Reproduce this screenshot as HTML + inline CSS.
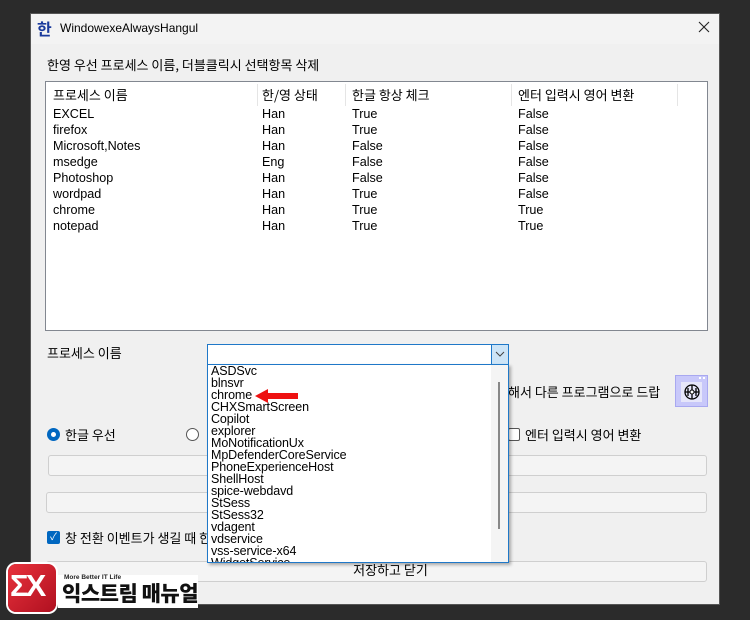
<!DOCTYPE html>
<html><head><meta charset="utf-8"><style>
*{margin:0;padding:0;box-sizing:border-box}
body{width:750px;height:620px;background:#2b2b2b;position:relative;overflow:hidden;font-family:"Liberation Sans","Noto Sans CJK KR",sans-serif;font-size:12px;color:#000}
.a{position:absolute;white-space:nowrap}
#win{position:absolute;left:30px;top:13px;width:690px;height:592px;background:#f0f0f0;border:1px solid #555}
#tb{position:absolute;left:0;top:0;width:100%;height:30px;background:#f3f3f3}
.k{font-family:"Noto Sans CJK KR",sans-serif;font-size:13px;line-height:15px}
#list{position:absolute;left:45px;top:81px;width:663px;height:250px;background:#fff;border:1px solid #828790}
.sep{position:absolute;top:2px;width:1px;height:22px;background:#e5e5e5}
.inp{position:absolute;height:21px;background:#f4f4f4;border:1px solid #cfcfcf;border-radius:3px}
#dd{position:absolute;left:207px;top:364px;width:302px;height:199px;background:#fff;border:1px solid #1f78c8;box-shadow:2px 2px 3px rgba(0,0,0,.3);overflow:hidden}
#dd div{height:12px;line-height:12px;font-size:12.5px;padding-left:3px;letter-spacing:-0.1px}
.col{line-height:16px;font-size:12.6px}
</style></head><body>
<div id="win">
 <div id="tb"></div>
</div>
<div class="a" style="left:37px;top:16px;font-family:'Noto Sans CJK KR',sans-serif;font-size:16px;font-weight:bold;color:#1a3a9c">한</div>
<div class="a" style="left:60px;top:21px;font-size:12px">WindowexeAlwaysHangul</div>
<svg class="a" style="left:698px;top:21px" width="12" height="12"><path d="M1 1L11 11M11 1L1 11" stroke="#222" stroke-width="1.1"/></svg>
<div class="a k" style="left:47px;top:57px">한영 우선 프로세스 이름, 더블클릭시 선택항목 삭제</div>
<div id="list">
 <div class="a k" style="left:7px;top:5px">프로세스 이름</div>
 <div class="a k" style="left:216px;top:5px">한/영 상태</div>
 <div class="a k" style="left:306px;top:5px">한글 항상 체크</div>
 <div class="a k" style="left:472px;top:5px">엔터 입력시 영어 변환</div>
 <div class="sep" style="left:211px"></div><div class="sep" style="left:299px"></div><div class="sep" style="left:465px"></div><div class="sep" style="left:631px"></div>
</div>
<div class="a col" style="left:53px;top:106px">EXCEL<br>firefox<br>Microsoft,Notes<br>msedge<br>Photoshop<br>wordpad<br>chrome<br>notepad</div>
<div class="a col" style="left:262px;top:106px">Han<br>Han<br>Han<br>Eng<br>Han<br>Han<br>Han<br>Han</div>
<div class="a col" style="left:352px;top:106px">True<br>True<br>False<br>False<br>False<br>True<br>True<br>True</div>
<div class="a col" style="left:518px;top:106px">False<br>False<br>False<br>False<br>False<br>False<br>True<br>True</div>

<div class="a k" style="left:47px;top:345px">프로세스 이름</div>
<div class="a" style="left:207px;top:344px;width:302px;height:21px;background:#fff;border:1px solid #1f78c8"></div>
<div class="a" style="left:491px;top:345px;width:17px;height:19px;background:#cce4f7;border-left:1px solid #1f78c8"></div>
<svg class="a" style="left:495px;top:351px" width="10" height="6"><path d="M1 1L5 5L9 1" stroke="#444" fill="none"/></svg>

<div class="a k" style="left:508px;top:384px">해서 다른 프로그램으로 드랍</div>
<div class="a" style="left:675px;top:375px;width:33px;height:32px;background:#c8c8fa;border:1px solid #a8a8f0">
 <div class="a" style="left:5px;top:6px;width:21px;height:20px;background:#e6e6fa"></div>
 <div class="a" style="left:23px;top:1px;width:2px;height:2px;background:#fff"></div><div class="a" style="left:27px;top:1px;width:2px;height:2px;background:#fff"></div>
 <svg class="a" style="left:6px;top:7px" width="20" height="18" viewBox="0 0 20 18"><circle cx="10" cy="9" r="7" fill="none" stroke="#000" stroke-width="1.3"/><path d="M3 9H17M10 2V16M6 5V13M14 5V13" stroke="#000" stroke-width="1.3"/><circle cx="10" cy="9" r="2" fill="#fff" stroke="#000"/></svg>
</div>

<div class="a" style="left:47px;top:428px;width:13px;height:13px;border-radius:50%;background:#0067c0"><div class="a" style="left:4px;top:4px;width:5px;height:5px;border-radius:50%;background:#fff"></div></div>
<div class="a k" style="left:65px;top:427px">한글 우선</div>
<div class="a" style="left:186px;top:428px;width:13px;height:13px;border-radius:50%;border:1px solid #555;background:#fff"></div>
<div class="a" style="left:508px;top:428px;width:12px;height:13px;border-radius:2px;border:1px solid #555;background:#fff"></div>
<div class="a k" style="left:525px;top:427px">엔터 입력시 영어 변환</div>
<div class="inp" style="left:48px;top:455px;width:659px"></div>
<div class="inp" style="left:46px;top:492px;width:661px"></div>
<div class="a" style="left:47px;top:531px;width:13px;height:13px;border-radius:2px;background:#0067c0;color:#fff;font-size:10px;line-height:13px;text-align:center">✓</div>
<div class="a k" style="left:65px;top:530px">창 전환 이벤트가 생길 때 한</div>
<div class="inp" style="left:46px;top:561px;width:661px;text-align:center;line-height:18px"><span class="k" style="position:relative;left:14px">저장하고 닫기</span></div>

<div id="dd">
<div>ASDSvc</div><div>blnsvr</div><div>chrome</div><div>CHXSmartScreen</div><div>Copilot</div><div>explorer</div><div>MoNotificationUx</div><div>MpDefenderCoreService</div><div>PhoneExperienceHost</div><div>ShellHost</div><div>spice-webdavd</div><div>StSess</div><div>StSess32</div><div>vdagent</div><div>vdservice</div><div>vss-service-x64</div><div>WidgetService</div>
<span class="a" style="left:283px;top:0;width:17px;height:199px;background:#f4f4f4"></span>
<span class="a" style="left:290px;top:17px;width:2px;height:147px;background:#888"></span>
</div>
<svg class="a" style="left:255px;top:388px" width="44" height="16"><path d="M0 8L13 1V5H43V11H13V15Z" fill="#ee1111"/></svg>

<div class="a" style="left:58px;top:575px;width:140px;height:33px;background:#fff"></div>
<div class="a" style="left:8px;top:564px;width:48px;height:48px;border-radius:8px;background:linear-gradient(135deg,#e8323c,#b01020);box-shadow:0 0 0 2px #fff"></div>
<div class="a" style="left:10px;top:568px;font-size:31px;font-weight:bold;color:#fff;font-family:'Liberation Sans',sans-serif;letter-spacing:-3px">ΣX</div>
<div class="a" style="left:64px;top:574px;font-size:6.5px;font-weight:bold;color:#222">More Better IT Life</div>
<div class="a" style="left:62px;top:580px;font-family:'Noto Sans CJK KR',sans-serif;font-size:21px;font-weight:900;color:#111;letter-spacing:-0.5px;line-height:26px">익스트림 매뉴얼</div>
</body></html>
